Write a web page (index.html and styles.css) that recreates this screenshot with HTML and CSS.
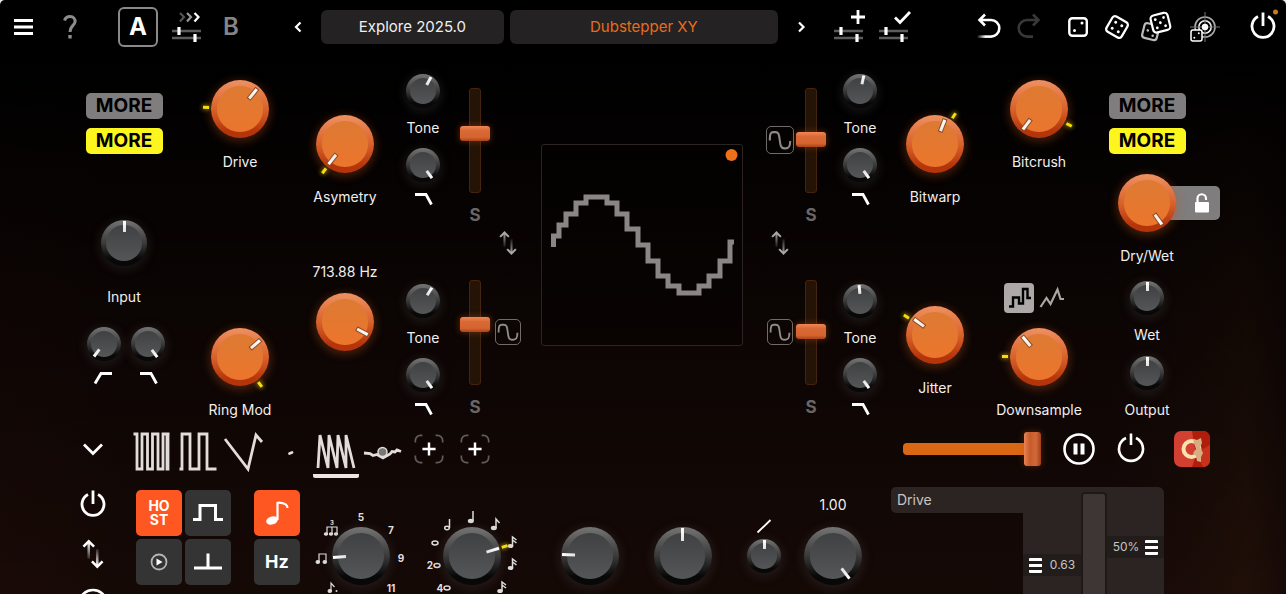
FILE: index.html
```html
<!DOCTYPE html>
<html lang="en">
<head>
<meta charset="utf-8">
<meta name="viewport" content="width=device-width, initial-scale=1">
<title>Dubstepper XY</title>
<link rel="stylesheet" href="styles.css">
</head>
<body>
<svg class="defs" aria-hidden="true">
  <defs>
    <linearGradient id="fade-l"><stop offset="0" stop-color="#fff" stop-opacity="0"/><stop offset=".6" stop-color="#fff"/></linearGradient>
    <linearGradient id="fade-up" gradientUnits="userSpaceOnUse" x1="0" y1="4" x2="0" y2="21"><stop offset="0" stop-color="#fff"/><stop offset="1" stop-color="#fff" stop-opacity=".1"/></linearGradient>
    <linearGradient id="fade-down" gradientUnits="userSpaceOnUse" x1="0" y1="11" x2="0" y2="28"><stop offset="0" stop-color="#fff" stop-opacity=".1"/><stop offset="1" stop-color="#fff"/></linearGradient>
  </defs>
  <symbol id="i-rails" viewBox="0 0 34 34"><path d="M3 21h29M3 28h29" stroke="#5c5c5c" stroke-width="2.4"/><path d="M10 17v8M26 24v8" stroke="#fff" stroke-width="3.2"/></symbol>
  <symbol id="i-power" viewBox="0 0 34 34"><path d="M12 7.6a11 11 0 1 0 10 0M17 3.500v13.500" fill="none" stroke="#fff" stroke-width="2.800"/></symbol>
  <symbol id="i-swap" viewBox="0 0 24 32"><path d="M6.800 4.500v16h2.400v-16z" fill="url(#fade-up)"/><path d="M14.800 11.500v16h2.400v-16z" fill="url(#fade-down)"/><path d="M3 9l5-5 5 5M11 23l5 5 5-5" fill="none" stroke="#fff" stroke-width="2.400"/></symbol>
  <symbol id="i-lowcut" viewBox="0 0 22 14"><path d="M2 12.500L8 2.500h11" fill="none" stroke="#fff" stroke-width="2.800"/></symbol>
  <symbol id="i-highcut" viewBox="0 0 22 14"><path d="M3 2.500h11l5.500 10" fill="none" stroke="#fff" stroke-width="2.800"/></symbol>
  <symbol id="i-sine" viewBox="0 0 28 28"><path d="M3 14.500C3 7 4 5.500 7 5.500h2c3.500 0 4 2.500 4.700 8.500s1.300 9 4.800 9H20c3.500 0 5-1.500 5-8" fill="none" stroke="#8f8b89" stroke-width="2.200"/></symbol>
  <symbol id="i-plus" viewBox="0 0 34 34"><path d="M2.500 10V8a5.500 5.500 0 0 1 5.500-5.500h2M24 2.500h2A5.500 5.500 0 0 1 31.500 8v2M31.500 24v2a5.500 5.500 0 0 1-5.500 5.500h-2M10 31.500H8A5.500 5.500 0 0 1 2.500 26v-2" fill="none" stroke="#625c5a" stroke-width="1.800"/><path d="M17 10v14M10 17h14" stroke="#fff" stroke-width="2.600"/></symbol>
</svg>

<div class="app">
  <header class="topbar">
    <div class="bar-group bar-main">
      <button class="icon-btn" aria-label="Menu"><svg viewBox="0 0 34 34"><path d="M8 10.500h19M8 17h19M8 23.500h19" stroke="#fff" stroke-width="2.800"/></svg></button>
      <button class="icon-btn" aria-label="Help"><svg viewBox="0 0 34 34"><path d="M11.500 10.500c1-3 3-4 5.500-4 3.500 0 5.500 2.500 5 5.500-.6 3.500-5 4-5 10" fill="none" stroke="#8c8c8c" stroke-width="3"/><path d="M17 25v3.500" stroke="#8c8c8c" stroke-width="3.400"/></svg></button>
    </div>
    <div class="bar-group bar-ab">
      <button class="slot slot-on">A</button>
      <button class="icon-btn" aria-label="Morph A to B"><svg viewBox="0 0 34 34"><use href="#i-rails"/><g fill="none" stroke-width="2.200"><path d="M11 3l4 4-4 4.500" stroke="#555"/><path d="M18 3l4 4-4 4.500" stroke="#999"/><path d="M25.500 3l4 4-4 4.500" stroke="#fff"/></g></svg></button>
      <button class="slot">B</button>
    </div>
    <div class="presets">
      <button class="step" aria-label="Previous preset"><svg viewBox="0 0 24 24"><path d="M14.500 7.500L10 12l4.500 4.500" fill="none" stroke="#fff" stroke-width="2.200"/></svg></button>
      <div class="fields">
        <button class="field field-bank">Explore 2025.0</button>
        <button class="field field-preset">Dubstepper XY</button>
      </div>
      <button class="step" aria-label="Next preset"><svg viewBox="0 0 24 24"><path d="M10 7.500l4.500 4.500-4.500 4.500" fill="none" stroke="#fff" stroke-width="2.200"/></svg></button>
    </div>
    <div class="bar-group bar-save">
      <button class="icon-btn" aria-label="Add snapshot"><svg viewBox="0 0 34 34"><use href="#i-rails" x="-2"/><path d="M25 0v14M18 7h14" stroke="#fff" stroke-width="2.800"/></svg></button>
      <button class="icon-btn" aria-label="Apply snapshot"><svg viewBox="0 0 34 34"><use href="#i-rails" x="-2"/><path d="M17 7.500l5 5L32 2" fill="none" stroke="#fff" stroke-width="2.800"/></svg></button>
    </div>
    <div class="bar-group bar-undo">
      <button class="icon-btn" aria-label="Undo"><svg viewBox="0 0 34 34"><path d="M13 4.500L7.500 10l5.500 5.500M7.500 10H19a8.300 8.300 0 0 1 0 16.600" fill="none" stroke="#fff" stroke-width="2.600"/><path d="M5 25.300h14v2.600H5z" fill="url(#fade-l)"/></svg></button>
      <button class="icon-btn dim" aria-label="Redo"><svg viewBox="0 0 34 34"><path d="M21 4.500l5.500 5.500-5.500 5.500M26.500 10H15a8.300 8.300 0 0 0 0 16.600h6" fill="none" stroke="#fff" stroke-width="2.600"/></svg></button>
    </div>
    <div class="bar-group bar-dice">
      <button class="icon-btn" aria-label="Randomize a little"><svg viewBox="0 0 34 34"><rect x="8.300" y="8.300" width="17.500" height="17.500" rx="3" fill="none" stroke="#fff" stroke-width="2.400"/><circle cx="21" cy="13" r="1.500" fill="#fff"/><circle cx="13.500" cy="20.500" r="1.500" fill="#fff"/></svg></button>
      <button class="icon-btn" aria-label="Randomize"><svg viewBox="0 0 34 34"><g transform="rotate(30 17 17)"><rect x="8.300" y="8.300" width="17.500" height="17.500" rx="3" fill="none" stroke="#fff" stroke-width="2.300"/><g fill="#fff"><circle cx="13.500" cy="13.500" r="1.500"/><circle cx="20.500" cy="13.500" r="1.500"/><circle cx="13.500" cy="20.500" r="1.500"/><circle cx="20.500" cy="20.500" r="1.500"/></g></g></svg></button>
      <button class="icon-btn" aria-label="Randomize a lot"><svg viewBox="0 0 34 34"><g transform="rotate(14 11 22)"><rect x="4" y="14" width="15" height="15" rx="3" fill="#000" stroke="#bbb" stroke-width="2.200"/><circle cx="8.500" cy="21" r="1.300" fill="#bbb"/><circle cx="14.500" cy="25" r="1.300" fill="#bbb"/></g><g transform="rotate(-14 21 12)"><rect x="12.500" y="4" width="17.500" height="17.500" rx="3.500" fill="#000" stroke="#fff" stroke-width="2.200"/><g fill="#fff"><circle cx="17" cy="8.500" r="1.400"/><circle cx="25.500" cy="8.500" r="1.400"/><circle cx="21.200" cy="12.800" r="1.400"/><circle cx="17" cy="17" r="1.400"/><circle cx="25.500" cy="17" r="1.400"/></g></g></svg></button>
      <button class="icon-btn target" aria-label="Randomize targets"><svg viewBox="0 0 34 34"><g fill="none" stroke="#aaa" stroke-width="1.600"><circle cx="18" cy="17" r="10"/><circle cx="18" cy="17" r="6.200" stroke="#eee"/><path d="M3 17h30M18 2v30" stroke="#777" stroke-width="1"/></g><circle cx="18" cy="17" r="3.200" fill="#fff"/><rect x="4" y="20" width="11" height="11" rx="2" fill="#000" stroke="#fff" stroke-width="1.500"/><circle cx="11.800" cy="23.200" r="1" fill="#fff"/><circle cx="7.300" cy="27.800" r="1" fill="#fff"/></svg></button>
    </div>
    <button class="icon-btn bar-power" aria-label="Power"><svg viewBox="0 0 34 34"><use href="#i-power" y="-1"/><circle cx="29.500" cy="2" r="2.500" fill="#c87a1c"/></svg></button>
  </header>

  <main class="rack">
    <section class="col col-io">
      <div class="more-stack"><button class="more">MORE</button><button class="more more-on">MORE</button></div>
      <label class="knob knob-input"><span class="dial dial-mid" style="--angle:0deg"><input type="range" value="50"></span><span>Input</span></label>
      <div class="filters">
        <label class="knob knob-small"><span class="dial dial-small" style="--angle:-143deg"><input type="range" value="0" aria-label="Low cut"></span><svg class="curve"><use href="#i-lowcut"/></svg></label>
        <label class="knob knob-small"><span class="dial dial-small" style="--angle:143deg"><input type="range" value="100" aria-label="High cut"></span><svg class="curve"><use href="#i-highcut"/></svg></label>
      </div>
    </section>
    <section class="col col-outer">
      <label class="knob"><span class="dial dial-hot" style="--angle:39deg"><i class="mod" style="--mod:-88deg"></i><input type="range" value="64"></span><span>Drive</span></label>
      <label class="knob"><span class="dial dial-hot" style="--angle:49deg"><i class="mod" style="--mod:143deg"></i><input type="range" value="67"></span><span>Ring Mod</span></label>
    </section>
    <section class="col col-inner">
      <label class="knob"><span class="dial dial-hot" style="--angle:-142deg"><i class="mod" style="--mod:-143deg"></i><input type="range" value="0"></span><span>Asymetry</span></label>
      <label class="knob knob-value"><span>713.88 Hz</span><span class="dial dial-hot" style="--angle:118deg"><input type="range" value="91"></span></label>
    </section>
    <section class="col col-tone">
      <div class="tone">
        <label class="knob knob-small"><span class="dial dial-small" style="--angle:28deg"><input type="range" value="60"></span><span>Tone</span></label>
        <label class="knob knob-small"><span class="dial dial-small" style="--angle:144deg"><input type="range" value="100" aria-label="High cut"></span><svg class="curve"><use href="#i-highcut"/></svg></label>
      </div>
      <div class="tone">
        <label class="knob knob-small"><span class="dial dial-small" style="--angle:32deg"><input type="range" value="61"></span><span>Tone</span></label>
        <label class="knob knob-small"><span class="dial dial-small" style="--angle:144deg"><input type="range" value="100" aria-label="High cut"></span><svg class="curve"><use href="#i-highcut"/></svg></label>
      </div>
    </section>
    <section class="col col-fader">
      <div class="strip"><input class="fader" type="range" value="58" aria-label="Drive level"><button class="solo">S</button></div>
      <div class="strip"><input class="fader" type="range" value="59" aria-label="Ring mod level"><button class="solo">S</button></div>
    </section>
    <section class="col col-route">
      <span class="wave-slot"></span>
      <button class="swap" aria-label="Swap left"><svg><use href="#i-swap"/></svg></button>
      <button class="wave wave-low" aria-label="Waveform"><svg><use href="#i-sine"/></svg></button>
    </section>
    <section class="col col-scope">
      <div class="scope">
        <svg viewBox="0 0 200 200"><circle cx="189.500" cy="10" r="6" fill="#f0701a"/><path d="M11.500 102V91H17V80H24V69H34V58H44V52H65V58H75V69H85V84H96V100H106V116H116V131H126V141H137V148H157V141H167V131H178V116H188V97H192" fill="none" stroke="#8b8684" stroke-width="5"/></svg>
      </div>
    </section>
    <section class="col col-route">
      <button class="wave" aria-label="Waveform"><svg><use href="#i-sine"/></svg></button>
      <button class="swap" aria-label="Swap right"><svg><use href="#i-swap"/></svg></button>
      <button class="wave wave-low" aria-label="Waveform"><svg><use href="#i-sine"/></svg></button>
    </section>
    <section class="col col-fader">
      <div class="strip"><input class="fader" type="range" value="51" aria-label="Bitwarp level"><button class="solo">S</button></div>
      <div class="strip"><input class="fader" type="range" value="51" aria-label="Jitter level"><button class="solo">S</button></div>
    </section>
    <section class="col col-tone">
      <div class="tone">
        <label class="knob knob-small"><span class="dial dial-small" style="--angle:12deg"><input type="range" value="54"></span><span>Tone</span></label>
        <label class="knob knob-small"><span class="dial dial-small" style="--angle:144deg"><input type="range" value="100" aria-label="High cut"></span><svg class="curve"><use href="#i-highcut"/></svg></label>
      </div>
      <div class="tone">
        <label class="knob knob-small"><span class="dial dial-small" style="--angle:-5deg"><input type="range" value="48"></span><span>Tone</span></label>
        <label class="knob knob-small"><span class="dial dial-small" style="--angle:144deg"><input type="range" value="100" aria-label="High cut"></span><svg class="curve"><use href="#i-highcut"/></svg></label>
      </div>
    </section>
    <section class="col col-inner col-jitter">
      <label class="knob"><span class="dial dial-hot" style="--angle:21deg"><i class="mod" style="--mod:33deg"></i><input type="range" value="57"></span><span>Bitwarp</span></label>
      <label class="knob"><span class="dial dial-hot" style="--angle:-54deg"><i class="mod" style="--mod:-58deg"></i><input type="range" value="31"></span><span>Jitter</span></label>
    </section>
    <section class="col col-outer col-crush">
      <label class="knob"><span class="dial dial-hot" style="--angle:-143deg"><i class="mod" style="--mod:117deg"></i><input type="range" value="0"></span><span>Bitcrush</span></label>
      <div class="modes">
        <button class="mode mode-on" aria-label="Stepped"><svg viewBox="0 0 30 30"><path d="M5 23.500h4v-9h6v6h4V6h4.500v9H27" fill="none" stroke="#000" stroke-width="2.400"/></svg></button>
        <button class="mode" aria-label="Smooth"><svg viewBox="0 0 30 30"><path d="M3.500 24l6-9 4 6 7-14.500 3 9.500h3.500" fill="none" stroke="#aaa6a4" stroke-width="2.200"/></svg></button>
      </div>
      <label class="knob"><span class="dial dial-hot" style="--angle:-40deg"><i class="mod" style="--mod:-90deg"></i><input type="range" value="36"></span><span>Downsample</span></label>
    </section>
    <section class="col col-io col-out">
      <div class="more-stack"><button class="more">MORE</button><button class="more more-on">MORE</button></div>
      <div class="mix">
        <button class="lock" aria-label="Lock mix"><svg viewBox="0 0 18 22"><rect x="2" y="10" width="14" height="10.500" rx="1" fill="#fff"/><path d="M4.500 11V6.500a4 4 0 0 1 8.500 0v1.500" fill="none" stroke="#fff" stroke-width="2.200"/></svg></button>
        <label class="knob"><span class="dial dial-hot" style="--angle:144deg"><input type="range" value="100"></span><span>Dry/Wet</span></label>
      </div>
      <label class="knob knob-small"><span class="dial dial-small" style="--angle:0deg"><input type="range" value="50"></span><span>Wet</span></label>
      <label class="knob knob-small"><span class="dial dial-small" style="--angle:0deg"><input type="range" value="50"></span><span>Output</span></label>
    </section>
  </main>

  <nav class="mods">
    <button class="collapse" aria-label="Collapse"><svg viewBox="0 0 34 34"><path d="M8 12.500l9 9 9-9" fill="none" stroke="#fff" stroke-width="2.800"/></svg></button>
    <div class="tabs">
      <button class="tab" aria-label="LFO 1"><svg viewBox="0 0 40 40"><path d="M1.500 2H5v35h5V2h5.500v35h5V2H26v35h5V2h4v35h1V2h1.500"/></svg></button>
      <button class="tab" aria-label="LFO 2"><svg viewBox="0 0 40 40"><path d="M1.500 37H4V2h8v35h9V2h8v35h9.500"/></svg></button>
      <button class="tab" aria-label="Envelope"><svg viewBox="0 0 40 40"><path d="M1 7l23 30 8-34 6 7"/></svg></button>
      <button class="tab" aria-label="Point"><svg viewBox="0 0 40 40"><path d="M19.500 21.500l2.500-1" stroke-linecap="round"/></svg></button>
      <button class="tab tab-on" aria-label="Saw"><svg viewBox="0 0 40 40"><path d="M2 36L4 3l8 33L13 3l8 33L22 3l8 33L30 3l8 33"/></svg></button>
      <button class="tab" aria-label="Follower"><svg viewBox="0 0 40 40"><path d="M2 21l6 .5 3 2 4-1 6 3.500 7-4 2-2.500 3 .5 2-2 4 1.500"/><circle cx="20.500" cy="20" r="4.500" fill="#777" stroke-width="1.500"/></svg></button>
      <button class="tab" aria-label="Add modulator"><svg class="plus"><use href="#i-plus"/></svg></button>
      <button class="tab" aria-label="Add modulator"><svg class="plus"><use href="#i-plus"/></svg></button>
    </div>
    <input class="amount" type="range" value="100" aria-label="Modulation amount">
    <button class="icon-btn mod-pause" aria-label="Pause"><svg viewBox="0 0 34 34"><circle cx="17" cy="17" r="14.500" fill="none" stroke="#fff" stroke-width="2.600"/><path d="M13.500 11.500v11M20.500 11.500v11" stroke="#fff" stroke-width="4"/></svg></button>
    <button class="icon-btn mod-power" aria-label="Modulation power"><svg viewBox="0 0 34 34"><path d="M12 6a12 12 0 1 0 10 0M17 1.500V13" fill="none" stroke="#fff" stroke-width="2.600"/></svg></button>
    <button class="brand" aria-label="About"><svg viewBox="0 0 36 36"><rect width="36" height="36" rx="7" fill="#d33f31"/><path d="M18 0h11a7 7 0 0 1 7 7v22a7 7 0 0 1-7 7H18l4-12z" fill="#b01d0a"/><path d="M22 22l14-8v15a7 7 0 0 1-7 7z" fill="#c8321c"/><circle cx="17.500" cy="18" r="8" fill="none" stroke="#f6e3ae" stroke-width="4"/><path d="M19 8l4 1 4-2 1 5-2 4 3 6-2 4 0 5-4-1-1-5-3-3 3-4-2-6z" fill="#d8ad84"/></svg></button>
  </nav>

  <section class="editor">
    <div class="side">
      <button class="icon-btn" aria-label="Modulator power"><svg viewBox="0 0 34 34"><use href="#i-power"/></svg></button>
      <button class="icon-btn" aria-label="Polarity"><svg viewBox="0 0 24 32"><use href="#i-swap"/></svg></button>
      <button class="icon-btn" aria-label="Loop"><svg viewBox="0 0 34 34"><circle cx="17" cy="17" r="14" fill="none" stroke="#fff" stroke-width="2.600"/></svg></button>
    </div>
    <div class="pads">
      <button class="pad pad-on pad-host">HO<br>ST</button>
      <button class="pad" aria-label="Gate"><svg viewBox="0 0 46 46"><path d="M8 29.500h7V15.500h15.500v14H38" fill="none" stroke="#fff" stroke-width="3"/></svg></button>
      <button class="pad" aria-label="Play"><svg viewBox="0 0 46 46"><circle cx="23" cy="23" r="7.500" fill="none" stroke="#b5b5b5" stroke-width="1.800"/><path d="M20.500 19.500v7l6-3.500z" fill="#fff"/></svg></button>
      <button class="pad" aria-label="Trigger"><svg viewBox="0 0 46 46"><path d="M9 29h28M23 29V14.500" stroke="#fff" stroke-width="3"/></svg></button>
    </div>
    <div class="pads pads-rate">
      <button class="pad pad-on" aria-label="Note"><svg viewBox="0 0 46 46"><ellipse cx="18" cy="30.500" rx="6" ry="4" transform="rotate(-18 18 30.500)" fill="#fff"/><path d="M23.500 30V12M23.500 12.500c3 .5 10 0 10 5.500" fill="none" stroke="#fff" stroke-width="2.200"/></svg></button>
      <button class="pad pad-hz">Hz</button>
    </div>
    <div class="scaled">
      <svg class="scale" viewBox="0 0 110 110">
        <g class="scale-text"><text x="55" y="21">5</text><text x="85" y="34">7</text><text x="95" y="62">9</text><text x="85" y="92">11</text><text x="26" y="25" class="scale-tiny">3</text></g>
        <g fill="#ddd" stroke="#ddd" stroke-width="1.200"><path d="M21 34v-7h10v7M26 27v7" fill="none"/><ellipse cx="20" cy="34" rx="1.600" ry="1.200"/><ellipse cx="25" cy="34" rx="1.600" ry="1.200"/><ellipse cx="30" cy="34" rx="1.600" ry="1.200"/><path d="M13 62v-8h7v8" fill="none"/><ellipse cx="11.800" cy="62" rx="1.700" ry="1.300"/><ellipse cx="18.800" cy="62" rx="1.700" ry="1.300"/><path d="M25 91v-8l3.500 4" fill="none"/><ellipse cx="23.800" cy="91" rx="1.700" ry="1.300"/><circle cx="30.500" cy="91" r=".4"/></g>
      </svg>
      <span class="dial dial-large" style="--angle:-94deg"><input type="range" value="17" aria-label="Subdivision"></span>
    </div>
    <div class="scaled">
      <svg class="scale" viewBox="0 0 110 110">
        <g class="scale-text"><text x="13" y="69">2</text><text x="23" y="92">4</text></g>
        <g fill="none" stroke="#ddd" stroke-width="1.500"><ellipse cx="18" cy="43" rx="3" ry="1.900"/><ellipse cx="20" cy="65.500" rx="3" ry="1.900"/><ellipse cx="30" cy="88" rx="3" ry="1.900"/><ellipse cx="30" cy="28" rx="2.300" ry="1.700"/><path d="M32.500 28v-9M56 21v-10M79 28v-9l3.500 4M95.500 46v-9l4 3M95.500 40l4 3M95.500 68v-9l4 3M95.500 62l4 3M85 91v-9l4 3M85 85l4 3"/></g>
        <g fill="#ddd"><ellipse cx="53.800" cy="21" rx="3" ry="2.200"/><ellipse cx="76.800" cy="28" rx="3" ry="2.200"/><ellipse cx="93.500" cy="46" rx="2.800" ry="2"/><ellipse cx="93.500" cy="68" rx="2.800" ry="2"/><ellipse cx="83" cy="91" rx="2.800" ry="2"/></g>
      </svg>
      <span class="dial dial-large" style="--angle:73deg"><i class="mod" style="--mod:73deg"></i><input type="range" value="75" aria-label="Rate"></span>
    </div>
    <div class="shape">
      <span class="dial dial-large" style="--angle:-88deg"><input type="range" value="19" aria-label="Phase"></span>
      <span class="dial dial-large" style="--angle:0deg"><input type="range" value="50" aria-label="Symmetry"></span>
      <label class="knob knob-slope"><svg class="slope" viewBox="0 0 16 16"><path d="M1.500 14.500l13-12.500" stroke="#fff" stroke-width="1.800"/></svg><span class="dial dial-small" style="--angle:0deg"><input type="range" value="50" aria-label="Slope"></span></label>
      <label class="knob knob-depth"><span>1.00</span><span class="dial dial-large" style="--angle:143deg"><input type="range" value="100"></span></label>
    </div>
    <div class="targets">
      <button class="target-name">Drive</button>
      <div class="target-body">
        <button class="handle handle-low"><span class="grip"></span>0.63</button>
        <div class="lane"></div>
        <button class="handle handle-high">50%<span class="grip"></span></button>
      </div>
    </div>
  </section>
</div>
</body>
</html>
```
FILE: styles.css
```css
* { box-sizing: border-box; }

html, body { margin: 0; height: 100%; background: #e8e8e8; }

body {
  font-family: Inter, "Liberation Sans", sans-serif;
  font-size: 14px;
  line-height: 20px;
  color: #f1efee;
  overflow: hidden;
}

button {
  margin: 0;
  padding: 0;
  border: 0;
  background: none;
  color: inherit;
  font: inherit;
  cursor: pointer;
}

input { margin: 0; }
svg { display: block; overflow: visible; }
.defs { position: absolute; width: 0; height: 0; }

.app {
  height: 100vh;
  overflow: hidden;
  border-radius: 5px 5px 0 0;
  background:
    linear-gradient(#000 10%, rgba(0, 0, 0, .5) 50%, transparent),
    linear-gradient(90deg, #190a07, #150906 10%, #150907 86%, #1b0c07 93%, #200f08 97%, #170a07);
}

/* Top bar */
.topbar { display: flex; align-items: center; height: 52px; padding: 1px 6px 0; }
.bar-group { display: flex; align-items: center; gap: 11px; }
.bar-main { gap: 13px; }
.bar-ab { margin-left: 31px; }
.bar-save { margin-left: 20px; }
.bar-undo { margin-left: 60px; gap: 6px; }
.bar-dice { margin-left: 15px; gap: 5px; }
.target { margin-left: 9px; }
.bar-power { margin-left: 25px; }
.icon-btn { flex: none; width: 34px; height: 34px; }
.icon-btn svg { width: 34px; height: 34px; }
.dim { opacity: .22; }

.slot { width: 34px; height: 40px; font-size: 24px; font-weight: 600; color: #858585; }
.slot-on { width: 40px; border: 2px solid #8a8a8a; border-radius: 6px; color: #fff; font-weight: 700; }

.presets { display: flex; flex: 1; align-items: center; gap: 11px; margin-left: 38px; }
.step { flex: none; width: 24px; height: 24px; }
.fields { display: flex; flex: 1; gap: 6px; }
.field { height: 34px; border-radius: 6px; background: #242222; font-size: 15px; }
.field-bank { flex: 182 1 0; }
.field-preset { flex: 267 1 0; color: #e86c1c; }

/* Rack of knobs */
.rack {
  display: grid;
  grid-template-columns: 116fr 116fr 94fr 62fr 42fr 24fr 244fr 31fr 32fr 66fr 84fr 124fr 92fr;
  height: 373px;
  padding: 0 93px 0 66px;
}
.col { display: flex; flex-direction: column; align-items: center; min-width: 0; }
.col-io { padding-top: 41px; }
.col-outer { padding-top: 28px; gap: 156px; }
.col-inner { padding-top: 63px; gap: 55px; }
.col-jitter { gap: 99px; }
.col-crush { gap: 0; }
.col-tone { padding-top: 22px; gap: 78px; }
.col-fader { padding-top: 36px; gap: 55px; }
.col-route { padding-top: 74px; }
.col-scope { padding-top: 92px; }

.more-stack { display: grid; gap: 9px; }
.more {
  width: 77px;
  height: 26px;
  border-radius: 5px;
  background: #7f7d7d;
  color: #000;
  font-size: 19px;
  font-weight: 700;
  line-height: 26px;
}
.more-on { background: #fdf51e; }

.knob { display: flex; flex-direction: column; align-items: center; gap: 14px; white-space: nowrap; }
.knob-value { gap: 11px; }
.knob-small { gap: 10px; }
.knob-input { margin-top: 66px; gap: 21px; }
.filters { display: flex; gap: 10px; margin: 20px 0 0 4px; }
.tone { display: grid; gap: 10px; }
.curve { width: 22px; height: 14px; }

.dial {
  --rim-top: #747474;
  --rim-bottom: #080808;
  --cap-top: #404142;
  --cap-bottom: #555657;
  position: relative;
  flex: none;
  display: block;
  border-radius: 50%;
  background: linear-gradient(var(--rim-top), #3a3a3a 50%, var(--rim-bottom) 85%);
  box-shadow: 0 2px 8px 3px rgba(70, 68, 68, .25);
}
.dial::before {
  content: "";
  position: absolute;
  inset: 11%;
  border-radius: 50%;
  background: linear-gradient(var(--cap-top), var(--cap-bottom));
}
.dial::after {
  content: "";
  position: absolute;
  inset: 0;
  background: linear-gradient(#fff, #e4e0de) 50% 1px / 3px 9px no-repeat;
  transform: rotate(var(--angle));
}
.dial input { position: absolute; inset: 0; width: 100%; height: 100%; opacity: 0; cursor: grab; }
.dial-small { width: 34px; height: 34px; }
.dial-mid { width: 46px; height: 46px; }
.dial-mid::after { background-size: 3px 11px; }
.dial-large { width: 58px; height: 58px; }
.dial-large::after { background-size: 3px 13px; }
.dial-hot {
  --cap-top: #dd7a33;
  --cap-bottom: #ec752c;
  width: 58px;
  height: 58px;
  background: linear-gradient(#ef9162, #d9622b 50%, #b5350b 88%);
  box-shadow: 0 2px 9px 2px rgba(190, 85, 30, .32);
}
.dial-hot::after {
  background:
    linear-gradient(#fff, #f1e7e2) 50% 3px / 3px 12px no-repeat,
    linear-gradient(#8a4a22, #8a4a22) 50% 2px / 5px 14px no-repeat;
}

.mod { position: absolute; inset: -8px; transform: rotate(var(--mod)); }
.mod::before {
  content: "";
  display: block;
  width: 3px;
  height: 6px;
  margin: 0 auto;
  background: #f5dc10;
  box-shadow: 0 0 4px 1px rgba(225, 200, 0, .5);
}

.strip { display: grid; justify-items: center; gap: 12px; }
.solo { width: 20px; height: 20px; color: #6b6664; font-size: 17px; font-weight: 700; line-height: 20px; }

.fader {
  appearance: none;
  writing-mode: vertical-lr;
  direction: rtl;
  width: 30px;
  height: 105px;
  background: none;
}
.fader::-webkit-slider-runnable-track {
  width: 12px;
  border: 1px solid #44240c;
  border-radius: 3px;
  background: #251306;
}
.fader::-webkit-slider-thumb {
  appearance: none;
  width: 30px;
  height: 15px;
  margin-left: -10px;
  border-radius: 3px;
  background: linear-gradient(#f08656, #d96a35 30%, #d5642f 75%, #a8441a);
  box-shadow: 0 0 6px 1px rgba(200, 90, 30, .35);
}

.wave, .wave-slot { width: 28px; height: 28px; }
.wave { border: 1px solid #6f6b69; border-radius: 5px; }
.wave svg { width: 26px; height: 26px; }
.wave-low { width: 26px; height: 26px; }
.wave-low svg { width: 24px; height: 24px; }
.swap { width: 24px; height: 28px; margin: 75px 0 62px; opacity: .65; }
.swap svg { width: 24px; height: 28px; }

.scope { width: 202px; height: 202px; border: 1px solid #2b2422; border-radius: 3px; background: rgba(0, 0, 0, .25); }

.modes { display: flex; gap: 3px; margin: 111px 8px 15px 0; }
.mode { width: 30px; height: 30px; }
.mode-on { border-radius: 4px; background: #aca9a8; }

.mix { position: relative; display: grid; justify-items: center; margin: 20px 0 15px; }
.mix .knob { position: relative; }
.lock {
  position: absolute;
  top: 12px;
  left: 50%;
  width: 73px;
  height: 34px;
  padding-left: 46px;
  border-radius: 5px;
  background: #7f7d7d;
}
.lock svg { width: 18px; height: 22px; }
.col-out .knob-small + .knob-small { margin-top: 11px; }

/* Modulator tabs */
.mods { display: flex; align-items: flex-start; height: 60px; padding: 0 76px 0 69px; }
.collapse { flex: none; width: 48px; height: 48px; padding: 7px; }
.tabs { display: flex; flex: 1; margin-left: 12px; }
.tab { width: 46px; height: 53px; padding: 4px 3px 0; border-bottom: 4px solid transparent; }
.tab svg { width: 40px; height: 40px; fill: none; stroke: #e2dcda; stroke-width: 2.800; }
.tab .plus { width: 32px; height: 32px; margin: 1px 5px 7px; }
.tab-on { border-bottom-color: #ebe6e4; border-radius: 2px; }

.amount {
  appearance: none;
  flex: none;
  width: 138px;
  height: 34px;
  margin-top: 7px;
  background: none;
}
.amount::-webkit-slider-runnable-track { height: 12px; border-radius: 4px; background: #d96714; }
.amount::-webkit-slider-thumb {
  appearance: none;
  width: 17px;
  height: 34px;
  margin-top: -11px;
  border-radius: 3px;
  background: linear-gradient(90deg, #ea8353, #c65a2a 35%, #d2683a 70%, #9f4119);
  box-shadow: 0 0 6px 1px rgba(200, 90, 30, .25);
}
.mod-pause { margin: 7px 0 0 21px; }
.mod-power { margin: 7px 0 0 18px; }
.brand { flex: none; width: 36px; height: 36px; margin: 6px 0 0 26px; }

/* Modulator editor */
.editor {
  display: grid;
  grid-template-columns: 67fr 118fr 52fr 110fr 112fr 363fr 273fr;
  padding: 0 122px 0 69px;
}
.side { display: grid; gap: 16px; align-content: start; justify-items: center; width: 48px; padding-top: 2px; }
.pads { display: grid; grid-template-columns: 46px 46px; gap: 3px; align-content: start; padding-top: 5px; }
.pads-rate { grid-template-columns: 46px; }
.pad { width: 46px; height: 46px; border-radius: 5px; background: #353434; color: #fff; }
.pad-on { background: #ff5722; }
.pad-host { font-size: 14px; font-weight: 700; line-height: 14px; }
.pad-hz { font-size: 18px; font-weight: 700; }

.scaled { position: relative; display: grid; justify-items: center; align-content: start; padding-top: 42px; }
.scale { position: absolute; top: 15px; left: 50%; width: 110px; height: 110px; margin-left: -55px; }
.scale-text { fill: #e2dedc; font-size: 10px; font-weight: 700; text-anchor: middle; }
.scale-tiny { font-size: 6px; }

.shape {
  display: grid;
  grid-template-columns: 92fr 93fr 70fr 68fr;
  justify-items: center;
  align-items: start;
  padding: 0 24px 0 16px;
}
.shape > .dial { margin-top: 42px; }
.knob-slope { padding-top: 33px; gap: 5px; }
.slope { width: 16px; height: 16px; }
.knob-depth { padding-top: 10px; gap: 12px; }

.targets { display: grid; grid-template-columns: 132fr 141fr; align-items: start; padding-top: 2px; color: #c9c4c2; }
.target-name { height: 26px; padding-left: 6px; border-radius: 5px 0 0 5px; background: #2b2422; text-align: left; }
.target-body {
  display: grid;
  grid-template-columns: 58fr 26px 57fr;
  height: 180px;
  border-radius: 0 6px 0 0;
  background: #2b2422;
}
.lane { margin-top: 5px; border: 2px solid #1e1816; border-bottom: 0; border-radius: 4px 4px 0 0; background: #3d3634; }
.handle { display: flex; align-items: center; justify-content: center; gap: 8px; height: 22px; background: #221c1a; font-size: 12px; }
.handle-low { margin-top: 67px; }
.handle-high { margin-top: 49px; gap: 6px; }
.grip {
  width: 13px;
  height: 15px;
  border-top: 3px solid #fff;
  border-bottom: 3px solid #fff;
  border-radius: 1px;
  background: linear-gradient(#fff, #fff) 0 50% / 13px 3px no-repeat;
}
```
